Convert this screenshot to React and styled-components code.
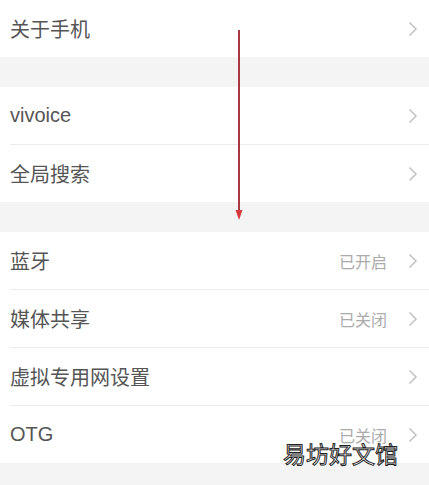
import React from "react";
import styled, { createGlobalStyle } from "styled-components";

const GlobalStyle = createGlobalStyle`
  html, body {
    margin: 0;
    padding: 0;
    background: #ffffff;
  }
  body {
    font-family: "Liberation Sans", "Noto Sans CJK SC", sans-serif;
  }
`;

const groups = [
  [{ label: "关于手机" }],
  [{ label: "vivoice" }, { label: "全局搜索" }],
  [
    { label: "蓝牙", status: "已开启" },
    { label: "媒体共享", status: "已关闭" },
    { label: "虚拟专用网设置" },
    { label: "OTG", status: "已关闭" },
  ],
];

const Chevron = () => (
  <ChevronSvg width="10" height="16" viewBox="0 0 10 16">
    <path d="M1.5 1.5 L8 8 L1.5 14.5" fill="none" stroke="#c4c4c4" strokeWidth="1.6" />
  </ChevronSvg>
);

const App = () => {
  return (
    <>
      <GlobalStyle />
      <Page>
        {groups.map((items, gi) => (
          <React.Fragment key={gi}>
            {gi > 0 && <Gap />}
            <Group>
              {items.map((item, i) => (
                <Row key={item.label} last={i === items.length - 1}>
                  <Label>{item.label}</Label>
                  <Right>
                    {item.status && <Status>{item.status}</Status>}
                    <Chevron />
                  </Right>
                </Row>
              ))}
            </Group>
          </React.Fragment>
        ))}
        <Gap />

        <Arrow width="12" height="192" viewBox="0 0 12 192">
          <line x1="6" y1="0" x2="6" y2="182" stroke="#a83a3f" strokeWidth="2" />
          <path d="M2.5 180 L9.5 180 L6 190 Z" fill="#d63a3a" />
        </Arrow>
        <Watermark>易坊好文馆</Watermark>
      </Page>
    </>
  );
};

export default App;

const Page = styled.div`
  position: relative;
  width: 429px;
  height: 485px;
  overflow: hidden;
  background: #ffffff;
`;

const Gap = styled.div`
  height: 30px;
  background: #f4f4f4;
`;

const Group = styled.div`
  background: #ffffff;
  padding-left: 10px;
`;

const Row = styled.div`
  height: 57px;
  display: flex;
  align-items: center;
  justify-content: space-between;
  padding-right: 11px;
  border-bottom: ${(p) => (p.last ? "none" : "1px solid #ececec")};
`;

const Label = styled.span`
  font-size: 20px;
  color: #555555;
`;

const Right = styled.div`
  display: flex;
  align-items: center;
  gap: 21px;
`;

const Status = styled.span`
  font-size: 16px;
  color: #ababab;
`;

const ChevronSvg = styled.svg`
  display: block;
`;

const Arrow = styled.svg`
  position: absolute;
  left: 233px;
  top: 30px;
`;

const Watermark = styled.div`
  position: absolute;
  left: 283px;
  top: 436px;
  font-family: "Noto Sans CJK SC", sans-serif;
  font-size: 23px;
  color: #ffffff;
  -webkit-text-stroke: 1px #222;
`;
